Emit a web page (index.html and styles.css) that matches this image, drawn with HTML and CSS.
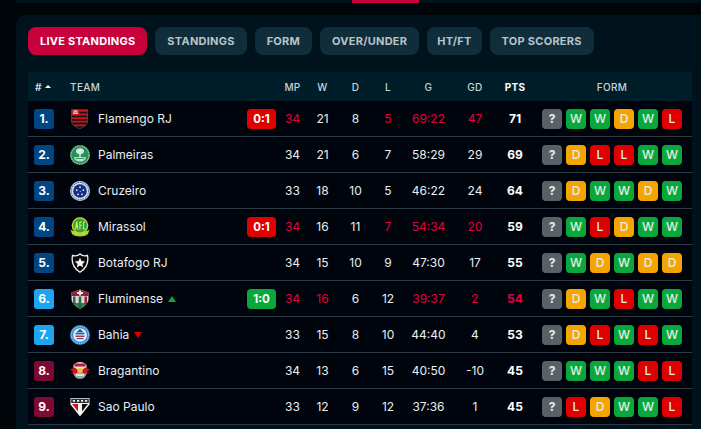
FILE: index.html
```html
<!DOCTYPE html>
<html lang="en">
<head>
<meta charset="utf-8">
<title>Live Standings</title>
<link rel="stylesheet" href="styles.css">
</head>
<body>
<div class="topbar"><span class="topbar-active"></span></div>
<main class="card">
  <nav class="tabs">
    <a class="tab tab-active">LIVE STANDINGS</a>
    <a class="tab">STANDINGS</a>
    <a class="tab">FORM</a>
    <a class="tab">OVER/UNDER</a>
    <a class="tab tab-tight">HT/FT</a>
    <a class="tab">TOP SCORERS</a>
  </nav>
  <section class="table">
    <div class="row head">
      <div class="c-pos">#<i class="sort"></i></div>
      <div class="c-team team-h">TEAM</div>
      <div class="c-live"></div>
      <div class="c">MP</div><div class="c">W</div><div class="c">D</div><div class="c">L</div><div class="c">G</div><div class="c">GD</div>
      <div class="c strong">PTS</div>
      <div class="c-form-h">FORM</div>
    </div>

    <div class="row">
      <div class="c-pos"><span class="rank blue">1.</span></div>
      <div class="c-team"><svg class="logo" viewBox="0 0 20 20"><defs><clipPath id="fla"><path d="M1.500 0.500H17.500V12.500C17.500 16 13 18.500 9.500 20C6 18.500 1.500 16 1.500 12.500Z"/></clipPath></defs><g clip-path="url(#fla)"><path d="M0 0h20v20H0z" fill="#151515"/><path d="M0 1h20v1.800H0zM0 4.600h20v1.800H0zM0 8.200h20v1.800H0zM0 11.800h20v1.800H0zM0 15.400h20v1.800H0z" fill="#d0101f"/><path d="M1.500 0.500H9.500V6.400H1.500z" fill="#b8202a"/><path d="M3.500 1.500h4v1.200h-4zM3 3.500h5v1.200H3z" fill="#f1e4e4"/></g><path d="M1.500 0.500H17.500V12.500C17.500 16 13 18.500 9.500 20C6 18.500 1.500 16 1.500 12.500Z" fill="none" stroke="#5c5c5c" stroke-width=".6"/></svg><span>Flamengo RJ</span></div>
      <div class="c-live"><span class="live lose">0:1</span></div>
      <div class="c red">34</div><div class="c">21</div><div class="c">8</div><div class="c red">5</div><div class="c red">69:22</div><div class="c red">47</div>
      <div class="c pts">71</div>
      <div class="form"><b class="q">?</b><b class="w">W</b><b class="w">W</b><b class="d">D</b><b class="w">W</b><b class="l">L</b></div>
    </div>

    <div class="row">
      <div class="c-pos"><span class="rank blue">2.</span></div>
      <div class="c-team"><svg class="logo" viewBox="0 0 20 20"><circle cx="10" cy="10" r="10" fill="#2a8f58"/><circle cx="10" cy="10" r="9" fill="none" stroke="#9fd0b2" stroke-width="1.100" stroke-dasharray="1.400 .9"/><path d="M10 3.200c2.700 0 4.300 1.500 4 3.600-.3 1.600-2.200 2.400-3.200 2.400V12H9.200V9.200C8.200 9.200 6.300 8.400 6 6.800 5.700 4.700 7.300 3.200 10 3.200z" fill="#d4ecdd"/><path d="M4.300 12h11.400v2c-1.300 1.600-3.400 2.600-5.700 2.600S5.600 15.600 4.300 14z" fill="#b9dfc7"/><path d="M5.500 12.900h9v.9h-9z" fill="#2a8f58"/></svg><span>Palmeiras</span></div>
      <div class="c-live"></div>
      <div class="c">34</div><div class="c">21</div><div class="c">6</div><div class="c">7</div><div class="c">58:29</div><div class="c">29</div>
      <div class="c pts">69</div>
      <div class="form"><b class="q">?</b><b class="d">D</b><b class="l">L</b><b class="l">L</b><b class="w">W</b><b class="w">W</b></div>
    </div>

    <div class="row">
      <div class="c-pos"><span class="rank blue">3.</span></div>
      <div class="c-team"><svg class="logo" viewBox="0 0 20 20"><circle cx="10" cy="10" r="10" fill="#d5dcea"/><circle cx="10" cy="10" r="8.700" fill="none" stroke="#4a68a8" stroke-width="1.100" stroke-dasharray="1.500 .9"/><circle cx="10" cy="10" r="6.800" fill="#12307f"/><g fill="#e8eef8"><circle cx="10" cy="6.200" r=".9"/><circle cx="6.700" cy="9.200" r=".9"/><circle cx="13.300" cy="9.200" r=".9"/><circle cx="8" cy="13.300" r=".9"/><circle cx="12" cy="13.300" r=".9"/><circle cx="10.200" cy="10.600" r=".5"/></g></svg><span>Cruzeiro</span></div>
      <div class="c-live"></div>
      <div class="c">33</div><div class="c">18</div><div class="c">10</div><div class="c">5</div><div class="c">46:22</div><div class="c">24</div>
      <div class="c pts">64</div>
      <div class="form"><b class="q">?</b><b class="d">D</b><b class="w">W</b><b class="w">W</b><b class="d">D</b><b class="w">W</b></div>
    </div>

    <div class="row">
      <div class="c-pos"><span class="rank blue">4.</span></div>
      <div class="c-team"><svg class="logo" viewBox="0 0 20 20"><path d="M0.500 12.500C3 14 5 15 10 15s7-1 9.500-2.500L18 17c-2 1.800-5 2.500-8 2.500S4 18.800 2 17z" fill="#b3d233"/><circle cx="10" cy="8.500" r="8.300" fill="#d8dc22"/><circle cx="10" cy="8.500" r="7" fill="#2fa346"/><path d="M4.800 12.500L6.200 4.500h1.200L8.500 12.500H7.400L7.200 10.500H6.300L6 12.500zM9.400 4.500H12v1H10.400v2.300H11.800v1H10.400v3.700h-1zM13 4.500h2.200v1h-1.200v6h1.200v1H13z" fill="#e6e430"/></svg><span>Mirassol</span></div>
      <div class="c-live"><span class="live lose">0:1</span></div>
      <div class="c red">34</div><div class="c">16</div><div class="c">11</div><div class="c red">7</div><div class="c red">54:34</div><div class="c red">20</div>
      <div class="c pts">59</div>
      <div class="form"><b class="q">?</b><b class="w">W</b><b class="l">L</b><b class="d">D</b><b class="w">W</b><b class="w">W</b></div>
    </div>

    <div class="row">
      <div class="c-pos"><span class="rank blue">5.</span></div>
      <div class="c-team"><svg class="logo" viewBox="0 0 20 20"><path d="M2.500 2.500C5 3.200 8 2.800 10 1c2 1.800 5 2.200 7.500 1.500 1 5.500.3 12-7.500 16.700C2.200 14.500 1.500 8 2.500 2.500z" fill="#0a0a0a" stroke="#f2f2f2" stroke-width="1.300"/><path d="M10 4.800l1.500 3.300 3.600.4-2.700 2.400.8 3.500-3.200-1.800-3.200 1.800.8-3.500-2.700-2.400 3.600-.4z" fill="#f7f7f7"/></svg><span>Botafogo RJ</span></div>
      <div class="c-live"></div>
      <div class="c">34</div><div class="c">15</div><div class="c">10</div><div class="c">9</div><div class="c">47:30</div><div class="c">17</div>
      <div class="c pts">55</div>
      <div class="form"><b class="q">?</b><b class="w">W</b><b class="d">D</b><b class="w">W</b><b class="d">D</b><b class="d">D</b></div>
    </div>

    <div class="row">
      <div class="c-pos"><span class="rank cyan">6.</span></div>
      <div class="c-team"><svg class="logo" viewBox="0 0 20 20"><defs><clipPath id="flu"><path d="M10 0.500L18.500 3.500V10C18.500 14.500 14 18 10 19.800 6 18 1.500 14.500 1.500 10V3.500Z"/></clipPath></defs><g clip-path="url(#flu)"><path d="M0 0h20v20H0z" fill="#dcd6d2"/><path d="M0 0h20v7H0z" fill="#97203a"/><path d="M3 7.500h2.500V16H3zM8.700 7.500h2.600V19H8.700z" fill="#1f7048"/><path d="M14.500 7.500H17V16h-2.500z" fill="#97203a"/><path d="M0 14h20v6H0z" fill="#1f6a44" opacity=".85"/><path d="M7 3h6v2H7z" fill="#efe9e6"/><path d="M9 1.500h2v5H9z" fill="#efe9e6"/></g></svg><span>Fluminense</span><i class="up"></i></div>
      <div class="c-live"><span class="live win">1:0</span></div>
      <div class="c red">34</div><div class="c red">16</div><div class="c">6</div><div class="c">12</div><div class="c red">39:37</div><div class="c red">2</div>
      <div class="c pts red">54</div>
      <div class="form"><b class="q">?</b><b class="d">D</b><b class="w">W</b><b class="l">L</b><b class="w">W</b><b class="w">W</b></div>
    </div>

    <div class="row">
      <div class="c-pos"><span class="rank cyan">7.</span></div>
      <div class="c-team"><svg class="logo" viewBox="0 0 20 20"><circle cx="10" cy="10" r="10" fill="#3a8fce"/><circle cx="10" cy="10" r="8.500" fill="none" stroke="#cfe4f4" stroke-width=".9" stroke-dasharray="1.200 1"/><circle cx="10" cy="10" r="6.800" fill="#e9f1f8"/><path d="M10 3.800l4 3.700H6z" fill="#2460ae"/><path d="M5.500 8h9v1.400h-9z" fill="#2460ae"/><path d="M5.500 10.500h9V12h-9z" fill="#d42030"/><path d="M6.500 13h7v1.200h-7z" fill="#2460ae"/></svg><span>Bahia</span><i class="down"></i></div>
      <div class="c-live"></div>
      <div class="c">33</div><div class="c">15</div><div class="c">8</div><div class="c">10</div><div class="c">44:40</div><div class="c">4</div>
      <div class="c pts">53</div>
      <div class="form"><b class="q">?</b><b class="d">D</b><b class="l">L</b><b class="w">W</b><b class="l">L</b><b class="w">W</b></div>
    </div>

    <div class="row">
      <div class="c-pos"><span class="rank wine">8.</span></div>
      <div class="c-team"><svg class="logo" viewBox="0 0 20 20"><path d="M3.500 4C5 2 7.500 1 10 1s5 1 6.500 3v5h-13z" fill="#e4e4e8"/><path d="M4.500 2.500h11v3h-11z" fill="#c5162c"/><path d="M3 10h14c0 4.500-3 8-7 8s-7-3.500-7-8z" fill="#9aa1ad"/><path d="M6 13h8v2H6z" fill="#dfe2e6"/><path d="M0 8.500L5 6.500 9 10 6 12.500 1 12.200 3 10.500z" fill="#d3122a"/><path d="M20 8.500L15 6.500 11 10 14 12.500 19 12.200 17 10.500z" fill="#d3122a"/><circle cx="10" cy="9.500" r="2.600" fill="#f0c41c"/></svg><span>Bragantino</span></div>
      <div class="c-live"></div>
      <div class="c">34</div><div class="c">13</div><div class="c">6</div><div class="c">15</div><div class="c">40:50</div><div class="c">-10</div>
      <div class="c pts">45</div>
      <div class="form"><b class="q">?</b><b class="w">W</b><b class="w">W</b><b class="w">W</b><b class="l">L</b><b class="l">L</b></div>
    </div>

    <div class="row">
      <div class="c-pos"><span class="rank wine">9.</span></div>
      <div class="c-team"><svg class="logo" viewBox="0 0 20 20"><path d="M0.500 1H19.500V7.500L10 19.500 0.500 7.500z" fill="#f4f4f4"/><path d="M1.200 1.700h17.600v4.300H1.200z" fill="#2c2c2c"/><path d="M2.800 3h2.200v1.800H2.800zM7 3h2.200v1.800H7zM11 3h2.200v1.800H11zM15 3h2.200v1.800H15z" fill="#ececec"/><path d="M2 7H8V14.600z" fill="#d3122a"/><path d="M18 7H12V14.600z" fill="#111"/></svg><span>Sao Paulo</span></div>
      <div class="c-live"></div>
      <div class="c">33</div><div class="c">12</div><div class="c">9</div><div class="c">12</div><div class="c">37:36</div><div class="c">1</div>
      <div class="c pts">45</div>
      <div class="form"><b class="q">?</b><b class="l">L</b><b class="d">D</b><b class="w">W</b><b class="w">W</b><b class="l">L</b></div>
    </div>
  </section>
</main>
</body>
</html>
```
FILE: styles.css
```css
* { box-sizing: border-box; }
html, body { margin: 0; height: 100%; }
body {
  width: 701px; height: 429px; overflow: hidden;
  background: #00050a;
  color: #e8eef2;
  font-family: Inter, "Liberation Sans", sans-serif;
  font-size: 12px;
}
.topbar {
  height: 3px; margin-left: 16px;
  background: #00131c;
  padding-left: 336px;
}
.topbar-active { display: block; width: 67px; height: 3px; background: #c8003c; }
.card {
  margin: 12px 0 0 16px;
  height: 420px;
  padding: 12px 9px 0 12px;
  background: #00131c;
  border-radius: 10px 0 0 0;
}
.tabs { display: flex; gap: 8px; }
.tab {
  display: flex; align-items: center;
  height: 28px; padding: 0 12px;
  border-radius: 8px;
  background: #0f2d3a;
  color: #b9c4c9;
  font-size: 11px; font-weight: 700; letter-spacing: .25px;
}
.tab-active { background: #c8003c; color: #fff; }
.tab-tight { padding: 0 10px; }
.table { margin-top: 17px; }
.row {
  display: grid;
  grid-template-columns: 43px 174px 33px 29px 31px 35px 30px 51px 42px 38px 158px;
  align-items: center;
  height: 36px;
  background: #00050d;
  border-bottom: 1px solid #2b3a42;
}
.row.head {
  height: 29px;
  background: #001e2a;
  border-bottom: 0;
  font-size: 10px; font-weight: 500; letter-spacing: .3px;
  color: #c8d3d9;
}
.c { text-align: center; font-size: 12px; }
.head .c { font-size: 10px; }
.head .strong { font-weight: 700; color: #fff; }
.c-pos { padding-left: 6px; display: flex; align-items: center; }
.head .c-pos { padding-left: 7px; font-weight: 700; }
.sort {
  margin-left: 3px; width: 0; height: 0;
  border: 3px solid transparent; border-top: 0; border-bottom: 3px solid #fff;
}
.rank {
  display: flex; align-items: center; justify-content: center;
  width: 20px; height: 20px; border-radius: 3px;
  font-size: 12px; font-weight: 700; color: #fff;
}
.blue { background: #004682; }
.cyan { background: #1ea5ef; }
.wine { background: #7d0a32; }
.c-team { display: flex; align-items: center; font-size: 12px; }
.head .team-h { font-size: 10px; margin-left: -1px; letter-spacing: .4px; }
.logo { width: 20px; height: 20px; margin: 0 8px 0 -1px; flex: none; }
.up, .down { margin-left: 5px; width: 0; height: 0; border: 4px solid transparent; }
.up { border-top: 0; border-bottom: 6px solid #0aa83c; }
.down { border-bottom: 0; border-top: 6px solid #e00000; }
.c-live { display: flex; justify-content: center; }
.live {
  display: flex; align-items: center; justify-content: center;
  width: 29px; height: 20px; border-radius: 4px;
  font-size: 11.500px; font-weight: 700; color: #fff;
}
.lose { background: #e00000; }
.win { background: #0aa83c; }
.c.red, .red { color: #e4003c; }
.pts { font-weight: 700; color: #fff; }
.c-form-h { text-align: center; padding-right: 2px; }
.form { display: flex; gap: 4px; padding-left: 8px; }
.form b {
  display: flex; align-items: center; justify-content: center;
  width: 20px; height: 20px; border-radius: 4px;
  font-size: 12px; font-weight: 500; color: #e6f0e8;
}
.q { background: #5a6166; font-weight: 700 !important; }
.w { background: #0aa83c; }
.d { background: #f5a500; }
.l { background: #e00000; }
```
